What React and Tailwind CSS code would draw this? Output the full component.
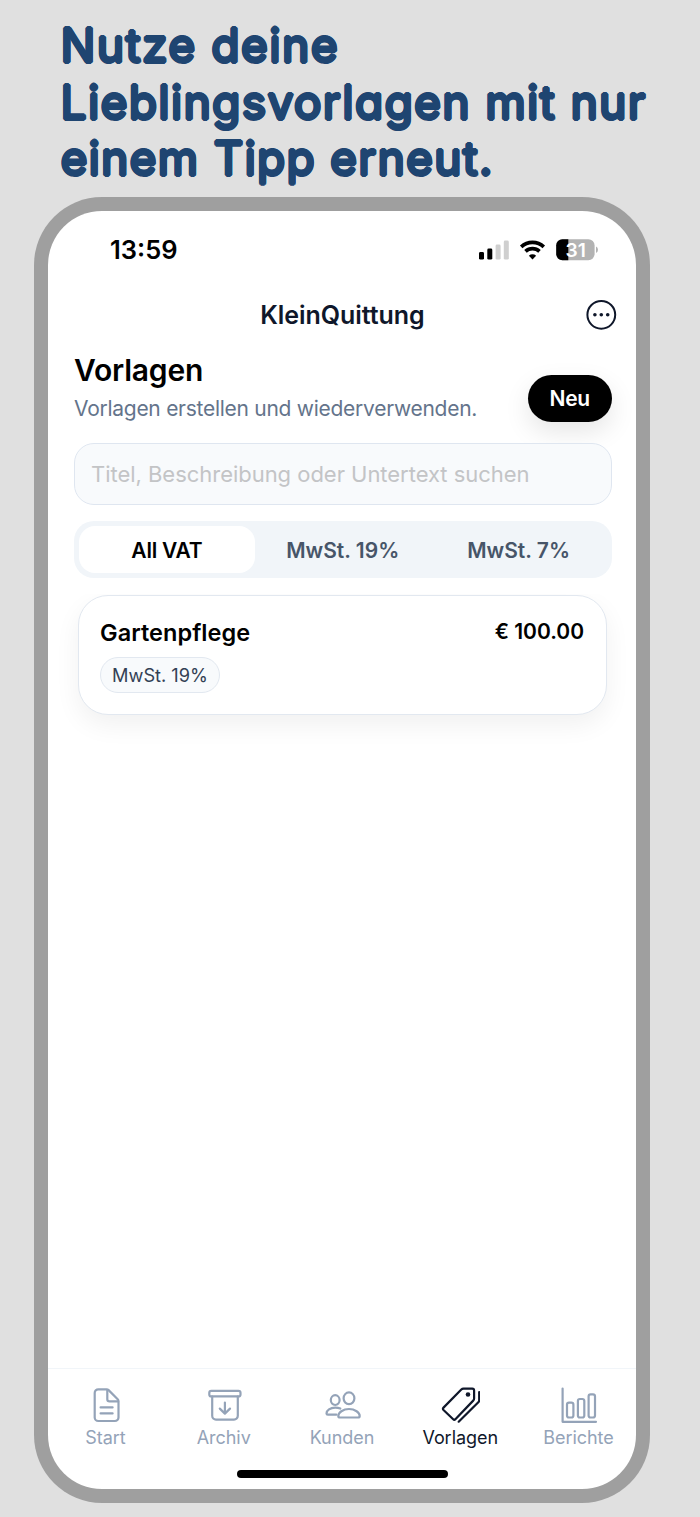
import React, { useState } from 'react';

const tabs = [
  { id: 'start', label: 'Start', icon: DocIcon },
  { id: 'archiv', label: 'Archiv', icon: ArchiveIcon },
  { id: 'kunden', label: 'Kunden', icon: PeopleIcon },
  { id: 'vorlagen', label: 'Vorlagen', icon: TagsIcon },
  { id: 'berichte', label: 'Berichte', icon: ChartIcon },
];

const templates = [{ id: 1, title: 'Gartenpflege', price: '€ 100.00', vat: 'MwSt. 19%' }];

const filters = ['All VAT', 'MwSt. 19%', 'MwSt. 7%'];

// -------------------------
// Main App Component
// -------------------------
export default function App() {
  const [activeTab, setActiveTab] = useState('vorlagen');

  return (
    <div className="w-[700px] h-[1517px] overflow-hidden bg-[#e0e0e0] font-['Inter','Liberation_Sans',sans-serif]">
      <Headline />
      <div className="ml-[34px] w-[616px] h-[1306px] rounded-[68px] bg-[#9f9f9f] p-[14px]">
        <div className="flex flex-col w-full h-full rounded-[54px] bg-white overflow-hidden">
          <StatusBar />
          <NavBar />
          <TemplatesScreen />
          <TabBar active={activeTab} onSelect={setActiveTab} />
        </div>
      </div>
    </div>
  );
}

// -------------------------
// Components
// -------------------------

// The ring of shadows thickens the strokes and rounds their ends
const Headline = () => (
  <h1 className="h-[197px] pt-[17px] pl-[60.6px] whitespace-nowrap text-[46px] leading-[56.6px] font-normal text-[#1f4571] [font-feature-settings:'cv11'] [text-shadow:1.6px_0_0,-1.6px_0_0,0_1.6px_0,0_-1.6px_0,1.15px_1.15px_0,-1.15px_1.15px_0,1.15px_-1.15px_0,-1.15px_-1.15px_0]">
    <span className="block tracking-[1.55px]">Nutze deine</span>
    <span className="block tracking-[1.43px]">Lieblingsvorlagen mit nur</span>
    <span className="block tracking-[1.3px]">einem Tipp erneut.</span>
  </h1>
);

const StatusBar = () => (
  <div className="shrink-0 h-[77px] pl-[62px] pr-[38px] flex items-center justify-between">
    <span className="pt-[2px] text-[25.5px] font-semibold">13:59</span>
    <svg className="w-[120px] h-6" viewBox="0 0 120 24">
      <rect x="1" y="14" width="5" height="7.6" rx="1.4" fill="#000" />
      <rect x="9.3" y="10.6" width="5" height="11" rx="1.4" fill="#000" />
      <rect x="17.6" y="6.6" width="5" height="15" rx="1.4" fill="#cfcfcf" />
      <rect x="25.8" y="2.6" width="5" height="19" rx="1.4" fill="#cfcfcf" />
      <g fill="none" stroke="#000" strokeWidth="3.6">
        <path d="M43.2 8.9a16.4 16.4 0 0 1 22.6 0" />
        <path d="M47.5 13.4a10.2 10.2 0 0 1 14 0" />
      </g>
      <path d="M54.5 21.4l-3.6-3.6a5.2 5.2 0 0 1 7.2 0z" fill="#000" />
      <clipPath id="battery">
        <rect x="78.2" y="1.2" width="38.4" height="21" rx="6.2" />
      </clipPath>
      <g clipPath="url(#battery)">
        <rect x="78" y="0" width="40" height="24" fill="#b3b3b3" />
        <rect x="78" y="0" width="12.3" height="24" fill="#000" />
      </g>
      <path d="M118 8.5q2 1 2 3.2t-2 3.2z" fill="#b3b3b3" />
      <text x="97.6" y="18.5" textAnchor="middle" fontSize="19.2" fontWeight="600" fill="#fff">31</text>
    </svg>
  </div>
);

const NavBar = () => (
  <div className="shrink-0 h-[54px] grid grid-cols-[1fr_auto_1fr] items-center text-[#0f172a]">
    <span />
    <span className="pt-[2px] pl-px text-[25px] font-semibold tracking-[-0.05px]">KleinQuittung</span>
    <button className="justify-self-end mr-[18.6px]">
      <svg className="w-8 h-8" viewBox="0 0 32 32">
        <circle cx="16.3" cy="15.8" r="13.9" fill="none" stroke="currentColor" strokeWidth="2" />
        <circle cx="9.9" cy="15.8" r="1.8" fill="currentColor" />
        <circle cx="16.3" cy="15.8" r="1.8" fill="currentColor" />
        <circle cx="22.7" cy="15.8" r="1.8" fill="currentColor" />
      </svg>
    </button>
  </div>
);

const TemplatesScreen = () => {
  const [query, setQuery] = useState('');
  const [filter, setFilter] = useState('All VAT');

  return (
    <main className="flex-1 min-h-0 flex flex-col pt-[10px]">
      <div className="flex items-end justify-between pl-[26px] pr-[24.5px] h-[69.5px]">
        <div>
          <h2 className="h-9 leading-[34px] text-[30px] font-semibold tracking-[-0.2px] text-black">Vorlagen</h2>
          <p className="mt-[7px] h-[26px] leading-[26px] text-[21px] tracking-[-0.27px] text-[#64748b]">
            Vorlagen erstellen und wiederverwenden.
          </p>
        </div>
        <button className="w-[83.5px] h-[47px] pt-px rounded-full bg-black text-white text-[21px] font-semibold tracking-[-0.3px] shadow-[0_10px_26px_rgba(0,0,0,0.1)]">
          Neu
        </button>
      </div>

      <input
        className="mt-[21.5px] ml-[26px] mr-[24.5px] h-[62px] shrink-0 rounded-[20px] border border-[#dfe6f0] bg-[#f8fafc] px-4 text-[22px] tracking-[-0.03px] placeholder:text-[#c3c4c6]"
        value={query}
        onChange={(e) => setQuery(e.target.value)}
        placeholder="Titel, Beschreibung oder Untertext suchen"
      />

      <div className="mt-4 ml-[26px] mr-[24.5px] h-[57px] shrink-0 rounded-[20px] bg-[#f1f5f9] p-[5px] grid grid-cols-3 text-[21px] font-semibold">
        {filters.map((name) => (
          <button
            key={name}
            onClick={() => setFilter(name)}
            className={`pt-[2px] rounded-[16px] ${
              filter === name ? 'bg-white text-black tracking-[-0.2px]' : 'text-[#475569]'
            }`}
          >
            {name}
          </button>
        ))}
      </div>

      <div className="mt-4 pt-px flex-1 min-h-0 overflow-hidden">
        {templates.map((item) => (
          <TemplateCard key={item.id} item={item} />
        ))}
      </div>
    </main>
  );
};

const TemplateCard = ({ item }) => (
  <div className="ml-[29.5px] mr-[29px] h-[120px] rounded-[30px] border border-[#e2e8f0] bg-white pl-[21.5px] pr-[22px] pt-[21px] shadow-[0_10px_26px_rgba(0,0,0,0.06)]">
    <div className="flex items-center justify-between h-[30px] text-black font-semibold">
      <span className="pt-px text-[23.5px] tracking-[0.04px]">{item.title}</span>
      <span className="text-[21px]">{item.price}</span>
    </div>
    <div className="mt-[10px] w-[120px] h-9 pt-px rounded-full border border-[#e2e8f0] bg-[#f8fafc] flex items-center justify-center text-[18.2px] text-[#334155]">
      {item.vat}
    </div>
  </div>
);

const TabBar = ({ active, onSelect }) => (
  <footer className="shrink-0 h-[121px] border-t border-[#f1f5f9]">
    <nav className="flex -mx-[1.6px] pt-4">
      {tabs.map(({ id, label, icon: Icon }) => (
        <button
          key={id}
          onClick={() => onSelect(id)}
          className={`flex-1 flex flex-col items-center ${active === id ? 'text-[#0f172a]' : 'text-[#94a3b8]'}`}
        >
          <Icon />
          <span className="mt-px h-6 leading-6 text-[18px] tracking-[-0.05px]">{label}</span>
        </button>
      ))}
    </nav>
    <div className="mx-auto mt-5 w-[211px] h-[7.5px] rounded-full bg-black" />
  </footer>
);

// -------------------------
// Icons
// -------------------------
function IconBase({ children }) {
  return (
    <svg
      className="w-10 h-10"
      viewBox="0 0 40 40"
      fill="none"
      stroke="currentColor"
      strokeWidth="2.2"
      strokeLinecap="round"
      strokeLinejoin="round"
    >
      {children}
    </svg>
  );
}

function DocIcon() {
  return (
    <IconBase>
      <path d="M32.5 16.6V32.4a3.6 3.6 0 0 1-3.6 3.6H12.3a3.6 3.6 0 0 1-3.6-3.6V7.9a3.6 3.6 0 0 1 3.6-3.6h8.3q1.2 0 2 .8l9.1 9.1q.8.8.8 2z" />
      <path d="M21.3 5v9.2q0 2.2 2.2 2.2h8.6" />
      <path d="M14.6 22.4h12M14.6 28.4h12" />
    </IconBase>
  );
}

function ArchiveIcon() {
  return (
    <IconBase>
      <rect x="5.3" y="5.8" width="31.2" height="5.6" rx="2" />
      <path d="M8.2 11.6v19.2a3.8 3.8 0 0 0 3.8 3.8h18a3.8 3.8 0 0 0 3.8-3.8V11.6" />
      <path d="M20.9 17.6v10.8M15.8 23.6l5.1 5 5.1-5" />
    </IconBase>
  );
}

function PeopleIcon() {
  return (
    <IconBase>
      <ellipse cx="27" cy="13.3" rx="5.4" ry="5.9" />
      <ellipse cx="13.2" cy="15.1" rx="4.4" ry="4.9" />
      <path d="M27 24c6 0 10.7 3.7 10.7 7 0 .9-.7 1.5-1.7 1.5H18c-1 0-1.7-.6-1.7-1.5 0-3.3 4.7-7 10.7-7z" />
      <path d="M18.3 23.6q-2.2-1-5.1-1c-5 0-8.7 3-8.7 5.800 0 .8.5 1.3 1.4 1.3h8.4" />
    </IconBase>
  );
}

function TagsIcon() {
  return (
    <IconBase>
      <path d="M23.5 3.7h8.8q1.8 0 1.8 1.8v8q0 1.2-.9 2.1L15.4 34.2q-1.1 1.1-2.2 0L3.5 25q-1.2-1.2 0-2.4L21.3 4.6q.9-.9 2.2-.9z" />
      <path d="M39.2 7v8.2q0 1.2-.9 2.1L18.7 36.7" />
      <circle cx="28" cy="9.5" r="2.3" fill="currentColor" stroke="none" />
    </IconBase>
  );
}

function ChartIcon() {
  return (
    <IconBase>
      <path d="M4.6 3.6v33.2H38" />
      <rect x="9" y="17.7" width="6.4" height="14.8" rx="2" />
      <rect x="19.9" y="14" width="6.4" height="18.5" rx="2" />
      <rect x="30.6" y="9.4" width="6.4" height="23.1" rx="2" />
    </IconBase>
  );
}
